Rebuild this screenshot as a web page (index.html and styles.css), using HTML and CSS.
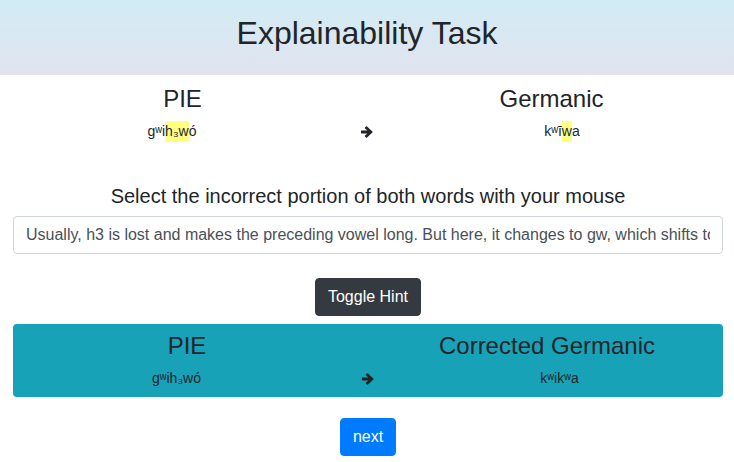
FILE: index.html
```html
<!DOCTYPE html>
<html lang="en">
<head>
<meta charset="utf-8">
<title>Explainability Task</title>
<link rel="stylesheet" href="styles.css">
</head>
<body>
<header class="banner"><h1>Explainability Task</h1></header>
<main>
  <section class="pair">
    <div class="headings"><h2>PIE</h2><h2>Germanic</h2></div>
    <div class="words">
      <div class="word">gʷi<mark>h₃w</mark>ó</div>
      <svg class="arrow" viewBox="0 0 12 14" aria-hidden="true"><path d="M0 5.600H6.300L4 3.400Q3.500 2.900 4 2.400L4.900 1.500Q5.500 1 6 1.500L11.400 6.500Q11.900 7 11.400 7.500L6 12.500Q5.500 13 4.900 12.500L4 11.600Q3.500 11.100 4 10.600L6.300 8.400H0.600Q0 8.400 0 7.800Z"/></svg>
      <div class="word">kʷī<mark>w</mark>a</div>
    </div>
  </section>
  <div class="content">
    <label class="prompt" for="reason">Select the incorrect portion of both words with your mouse</label>
    <input class="field" id="reason" type="text" value="Usually, h3 is lost and makes the preceding vowel long. But here, it changes to gw, which shifts to kw in Germanic.">
    <button class="btn btn-dark" type="button">Toggle Hint</button>
    <section class="pair hint">
      <div class="headings"><h2>PIE</h2><h2>Corrected Germanic</h2></div>
      <div class="words">
        <div class="word">gʷih₃wó</div>
        <svg class="arrow" viewBox="0 0 12 14" aria-hidden="true"><path d="M0 5.600H6.300L4 3.400Q3.500 2.900 4 2.400L4.900 1.500Q5.500 1 6 1.500L11.400 6.500Q11.900 7 11.400 7.500L6 12.500Q5.500 13 4.900 12.500L4 11.600Q3.500 11.100 4 10.600L6.300 8.400H0.600Q0 8.400 0 7.800Z"/></svg>
        <div class="word">kʷikʷa</div>
      </div>
    </section>
    <button class="btn btn-primary" type="button">next</button>
  </div>
</main>
</body>
</html>
```
FILE: styles.css
```css
* { box-sizing: border-box; }
body {
  margin: 0;
  font: 16px/24px "Liberation Sans", Arial, sans-serif;
  color: #212529;
  background: #fff;
}
h1, h2 { margin: 0; font-weight: 400; }
.banner {
  padding: 14px 16px 23px;
  text-align: center;
  background: linear-gradient(#d2ecf5, #e1e3ef);
}
h1 { font-size: 32px; line-height: 38px; }
h2 { font-size: 24px; line-height: 28px; }
.pair { padding-top: 10px; text-align: center; }
.headings { display: grid; grid-template-columns: 1fr 1fr; gap: 4px; }
.words {
  display: grid;
  grid-template-columns: 1fr 46px 1fr;
  align-items: center;
  justify-items: center;
  margin-top: 8px;
}
.word { font-size: 14px; line-height: 21px; }
mark { display: inline-block; color: inherit; background: #ffff80; }
.arrow {
  width: 12px;
  height: 14px;
  fill: currentColor;
}
.content {
  display: flex;
  flex-direction: column;
  align-items: center;
  padding: 42px 11px 6px 13px;
}
.prompt { margin-bottom: 8px; font-size: 20px; line-height: 24px; }
.field {
  width: 100%;
  height: 38px;
  padding: 6px 12px;
  font: inherit;
  color: #495057;
  background: #fff;
  border: 1px solid #ced4da;
  border-radius: 4px;
}
.btn {
  padding: 6px 12px;
  font: inherit;
  color: #fff;
  border: 1px solid;
  border-radius: 4px;
}
.btn-dark { margin: 24px 0 8px; background: #343a40; border-color: #343a40; }
.btn-primary { margin-top: 21px; background: #007bff; border-color: #007bff; }
.hint {
  width: 100%;
  padding: 8px 0;
  background: #17a2b8;
  border-radius: 4px;
}
.hint .headings { gap: 12px; padding-right: 2px; }
.hint .words { grid-template-columns: 1fr 56px 1fr; }
```
